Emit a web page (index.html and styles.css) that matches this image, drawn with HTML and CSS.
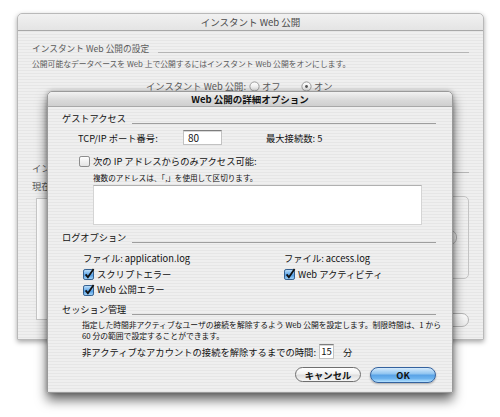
FILE: index.html
```html
<!DOCTYPE html>
<html lang="ja">
<head>
<meta charset="utf-8">
<title>インスタント Web 公開</title>
<link rel="stylesheet" href="styles.css">
</head>
<body>
<svg class="defs" width="0" height="0" aria-hidden="true">
  <defs>
    <linearGradient id="cbOn" x1="0" y1="0" x2="0" y2="1">
      <stop offset="0" stop-color="#c2e2fb"/>
      <stop offset="0.45" stop-color="#6fb0ec"/>
      <stop offset="0.55" stop-color="#4f9be3"/>
      <stop offset="1" stop-color="#a9d8fb"/>
    </linearGradient>
    <linearGradient id="cbOff" x1="0" y1="0" x2="0" y2="1">
      <stop offset="0" stop-color="#ffffff"/>
      <stop offset="0.5" stop-color="#f1f1f1"/>
      <stop offset="1" stop-color="#e2e2e2"/>
    </linearGradient>
  </defs>
</svg>
<div class="desk">
  <div class="win bgwin">
    <div class="titlebar inactive">インスタント Web 公開</div>
    <div class="winbody">
      <div class="grp-head"><span>インスタント Web 公開の設定</span><i class="rule"></i></div>
      <p class="desc">公開可能なデータベースを Web 上で公開するにはインスタント Web 公開をオンにします。</p>
      <div class="radio-row">
        <span class="radio-lbl">インスタント Web 公開:</span>
        <span class="radio first">
          <svg width="11" height="11" viewBox="0 0 11 11"><circle cx="5.5" cy="5.5" r="4.6" fill="url(#cbOff)" stroke="#9a9a9a"/></svg>オフ
        </span>
        <span class="radio">
          <svg width="11" height="11" viewBox="0 0 11 11"><circle cx="5.5" cy="5.5" r="4.6" fill="url(#cbOff)" stroke="#9a9a9a"/><circle cx="5.5" cy="5.5" r="1.4" fill="#555"/></svg>オン
        </span>
      </div>
      <div class="lower">
        <div class="left-col">
          <div class="lbl">インスタント Web 公開のステータス</div>
          <div class="lbl">現在のステータス:</div>
          <div class="listbox"></div>
        </div>
        <div class="right-col">
          <i class="rule side"></i>
          <div class="groupbox"><span class="pill inner"></span></div>
          <span class="pill"></span>
        </div>
      </div>
    </div>
  </div>

  <div class="win dialog">
    <div class="titlebar active">Web 公開の詳細オプション</div>
    <div class="dlgbody">
      <div class="sec-head"><span>ゲストアクセス</span><i class="rule"></i></div>

      <div class="port-row">
        <span class="port-lbl">TCP/IP ポート番号:</span>
        <span class="field port">80</span>
        <span class="maxconn">最大接続数: 5</span>
      </div>

      <div class="chk-row ip">
        <svg class="cb" width="12" height="12" viewBox="0 0 12 12"><rect x="0.5" y="1.5" width="10" height="10" rx="1.6" fill="url(#cbOff)" stroke="#8c8c8c"/></svg>
        <span>次の IP アドレスからのみアクセス可能:</span>
      </div>
      <p class="hint">複数のアドレスは、「,」を使用して区切ります。</p>
      <div class="textarea"></div>

      <div class="sec-head log"><span>ログオプション</span><i class="rule"></i></div>
      <div class="log-cols">
        <div class="log-col left">
          <div class="log-line">ファイル: application.log</div>
          <div class="log-line chk">
            <svg class="cb" width="12" height="12" viewBox="0 0 12 12"><rect x="0.5" y="1.5" width="10" height="10" rx="1.6" fill="url(#cbOn)" stroke="#35608f"/><path d="M2.6 6.4 L4.9 9.2 L10.6 0.9" fill="none" stroke="#111" stroke-width="1.8"/></svg>
            <span>スクリプトエラー</span>
          </div>
          <div class="log-line chk">
            <svg class="cb" width="12" height="12" viewBox="0 0 12 12"><rect x="0.5" y="1.5" width="10" height="10" rx="1.6" fill="url(#cbOn)" stroke="#35608f"/><path d="M2.6 6.4 L4.9 9.2 L10.6 0.9" fill="none" stroke="#111" stroke-width="1.8"/></svg>
            <span>Web 公開エラー</span>
          </div>
        </div>
        <div class="log-col right">
          <div class="log-line">ファイル: access.log</div>
          <div class="log-line chk">
            <svg class="cb" width="12" height="12" viewBox="0 0 12 12"><rect x="0.5" y="1.5" width="10" height="10" rx="1.6" fill="url(#cbOn)" stroke="#35608f"/><path d="M2.6 6.4 L4.9 9.2 L10.6 0.9" fill="none" stroke="#111" stroke-width="1.8"/></svg>
            <span>Web アクティビティ</span>
          </div>
        </div>
      </div>

      <div class="sec-head sess"><span>セッション管理</span><i class="rule"></i></div>
      <p class="sess-desc">指定した時間非アクティブなユーザの接続を解除するよう Web 公開を設定します。制限時間は、1 から<br>60 分の範囲で設定することができます。</p>
      <div class="time-row">
        <span class="time-lbl">非アクティブなアカウントの接続を解除するまでの時間:</span>
        <span class="field mins">15</span>
        <span class="unit">分</span>
      </div>

      <div class="btn-row">
        <button class="btn cancel">キャンセル</button>
        <button class="btn ok">OK</button>
      </div>
    </div>
  </div>
</div>
</body>
</html>
```

FILE: styles.css
```css
html, body {
  margin: 0;
  padding: 0;
  background: #ffffff;
}
body {
  font-family: "Noto Sans CJK JP", "Liberation Sans", sans-serif;
  color: #111;
}
.defs {
  display: block;
  width: 0;
  height: 0;
  overflow: hidden;
}
.desk {
  position: relative;
  width: 500px;
  height: 417px;
  overflow: hidden;
}
.win {
  position: absolute;
  box-sizing: border-box;
  display: flex;
  flex-direction: column;
  border-radius: 5px 5px 0 0;
  background: repeating-linear-gradient(to bottom, #efefef 0, #efefef 2px, #e6e6e6 2px, #e6e6e6 3px);
}
.bgwin {
  left: 17px;
  top: 13px;
  width: 467px;
  height: 327px;
  border: 1px solid #b9b9b9;
  box-shadow: 0 2px 5px rgba(0, 0, 0, 0.35);
}
.dialog {
  left: 47px;
  top: 91px;
  width: 406px;
  height: 302px;
  border: 1px solid #9a9a9a;
  box-shadow: 0 7px 12px rgba(0, 0, 0, 0.6), 0 0 4px rgba(0, 0, 0, 0.25);
}
.titlebar {
  flex: none;
  text-align: center;
  border-radius: 5px 5px 0 0;
  border-bottom: 1px solid #a8a8a8;
}
.titlebar.inactive {
  height: 16px;
  line-height: 16px;
  font-size: 9.5px;
  color: #4a4a4a;
  background: linear-gradient(#f1f1f1, #e4e4e4);
}
.titlebar.active {
  height: 14px;
  line-height: 14px;
  font-size: 9.5px;
  font-weight: bold;
  color: #111;
  background: linear-gradient(#f2f2f2, #d9d9d9 60%, #cfcfcf);
}

/* ---------- background window ---------- */
.winbody {
  padding: 12px 14px 0 14px;
  color: #5a5a5a;
}
.grp-head {
  display: flex;
  align-items: center;
  height: 12px;
  font-size: 8.7px;
  line-height: 12px;
  white-space: nowrap;
}
.rule {
  display: block;
  flex: 1;
  height: 1px;
  background: #b5b5b5;
  margin-left: 9px;
  margin-top: 6px;
}
.desc {
  margin: 4px 0 0 0;
  font-size: 7.8px;
  line-height: 10px;
  white-space: nowrap;
}
.radio-row {
  display: flex;
  align-items: center;
  height: 12px;
  margin-top: 11px;
  font-size: 9.3px;
  white-space: nowrap;
}
.radio-lbl {
  box-sizing: border-box;
  width: 217px;
  padding-right: 3px;
  text-align: right;
}
.radio {
  display: flex;
  align-items: center;
  gap: 2px;
}
.radio.first {
  width: 52px;
}
.lower {
  display: flex;
  justify-content: space-between;
  margin-top: 70px;
}
.left-col {
  width: 16px;
  overflow: hidden;
  display: flex;
  flex-direction: column;
}
.lbl {
  font-size: 9.3px;
  line-height: 12px;
  height: 12px;
  margin-bottom: 6px;
  white-space: nowrap;
  overflow: hidden;
}
.listbox {
  margin-left: 4px;
  height: 120px;
  background: #fff;
  border: 1px solid #c8c8c8;
  border-right: 0;
}
.right-col {
  width: 150px;
  display: flex;
  flex-direction: column;
  align-items: flex-end;
}
.rule.side {
  flex: none;
  width: 150px;
  margin: 10px 0 0 0;
}
.groupbox {
  box-sizing: border-box;
  width: 140px;
  height: 83px;
  margin-top: 23px;
  border: 1px solid #c3c3c3;
  border-radius: 5px;
  display: flex;
  justify-content: flex-end;
  align-items: center;
  padding-right: 11px;
}
.pill {
  display: block;
  width: 80px;
  height: 12px;
  border: 1px solid #b3b3b3;
  border-radius: 7px;
  background: linear-gradient(#fbfbfb, #e8e8e8);
  margin-top: 34px;
}
.pill.inner {
  width: 60px;
  height: 13px;
  margin-top: 0;
}

/* ---------- dialog ---------- */
.dlgbody {
  padding: 5px 16px 0 14px;
  font-size: 9.3px;
  color: #111;
}
.sec-head {
  display: flex;
  align-items: center;
  height: 12px;
  line-height: 12px;
  font-size: 9.2px;
  white-space: nowrap;
}
.sec-head .rule {
  margin-left: 6px;
  margin-top: 11px;
  background: #9e9e9e;
}
.port-row {
  display: flex;
  align-items: center;
  height: 15px;
  margin-top: 6px;
  padding-left: 16px;
  white-space: nowrap;
}
.port-lbl {
  width: 105px;
}
.field {
  box-sizing: border-box;
  display: block;
  background: #fff;
  border: 1px solid #c2c2c2;
  border-top-color: #7d7d7d;
  box-shadow: inset 0 1px 0 #d8d8d8;
  font-size: 10px;
  line-height: 13px;
  color: #111;
}
.field.port {
  width: 39px;
  height: 15px;
  padding-left: 4px;
}
.maxconn {
  margin-left: 44px;
}
.chk-row {
  display: flex;
  align-items: center;
  height: 12px;
  white-space: nowrap;
}
.chk-row.ip {
  margin-top: 10px;
  padding-left: 17px;
}
.cb {
  flex: none;
  margin-right: 2px;
}
.hint {
  margin: 6px 0 0 31px;
  font-size: 7.6px;
  line-height: 10px;
  white-space: nowrap;
}
.textarea {
  margin: 2px 0 0 31px;
  width: 329px;
  height: 40px;
  box-sizing: border-box;
  background: #fff;
  border: 1px solid #d4d4d4;
  border-top-color: #b0b0b0;
}
.sec-head.log {
  margin-top: 6px;
}
.log-cols {
  display: flex;
  margin-top: 8px;
}
.log-col.left {
  width: 222px;
  box-sizing: border-box;
  padding-left: 21px;
}
.log-line {
  height: 15.5px;
  line-height: 15.5px;
  display: flex;
  align-items: center;
  white-space: nowrap;
}
.sec-head.sess {
  margin-top: 5px;
}
.sess-desc {
  margin: 4.5px 0 0 20px;
  font-size: 7.8px;
  line-height: 11px;
  white-space: nowrap;
}
.time-row {
  display: flex;
  align-items: center;
  height: 15px;
  margin-top: 3px;
  padding-left: 20px;
  white-space: nowrap;
}
.time-lbl {
  width: 237px;
}
.field.mins {
  width: 15px;
  height: 15px;
  text-align: center;
  font-size: 9.5px;
}
.unit {
  margin-left: 9px;
}
.btn-row {
  display: flex;
  justify-content: flex-end;
  gap: 9px;
  margin-top: 7.5px;
}
.btn {
  box-sizing: border-box;
  font-family: "Noto Sans CJK JP", "Liberation Sans", sans-serif;
  font-size: 9.3px;
  font-weight: bold;
  padding: 0;
  color: #111;
  border-radius: 9px;
  display: flex;
  align-items: center;
  justify-content: center;
}
.btn.cancel {
  width: 66px;
  height: 15px;
  margin-top: 0.5px;
  border: 1px solid #6f6f6f;
  background: linear-gradient(#ffffff 0, #f1f1f1 45%, #dedede 55%, #f6f6f6 100%);
}
.btn.ok {
  width: 66px;
  height: 16px;
  border: 1px solid #34629e;
  background: linear-gradient(#d6ebfc 0, #93c6f1 40%, #5aa3e6 52%, #6cb3ef 75%, #b5e2ff 100%);
  box-shadow: 0 1px 2px rgba(0, 0, 0, 0.3);
}
```
